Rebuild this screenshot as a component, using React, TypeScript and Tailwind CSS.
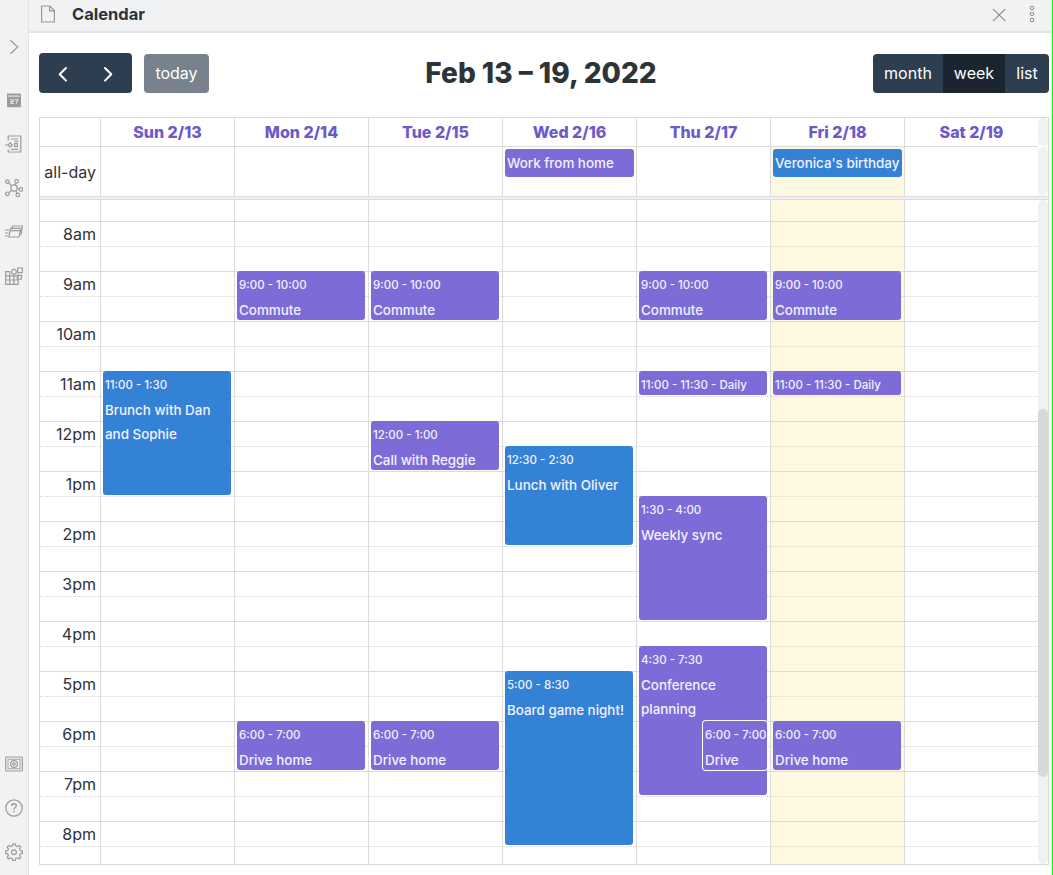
import type { ReactNode } from 'react';

type Tone = 'purple' | 'blue';
type CalEvent = { start: number; end: number; time: string; title: string; tone: Tone; inline?: boolean; nested?: boolean };
type Day = { label: string; allDay?: { title: string; tone: Tone }; today?: boolean; events: CalEvent[] };

const HOUR = 50;
const FIRST_HOUR_OFFSET = 21;

const tones: Record<Tone, string> = { purple: 'bg-[#7d6cd7]', blue: 'bg-[#3482d6]' };

const commute: CalEvent = { start: 9, end: 10, time: '9:00 - 10:00', title: 'Commute', tone: 'purple' };
const drive: CalEvent = { start: 18, end: 19, time: '6:00 - 7:00', title: 'Drive home', tone: 'purple' };
const daily: CalEvent = { start: 11, end: 11.5, time: '11:00 - 11:30', title: 'Daily', tone: 'purple', inline: true };

const days: Day[] = [
  { label: 'Sun 2/13', events: [{ start: 11, end: 13.5, time: '11:00 - 1:30', title: 'Brunch with Dan and Sophie', tone: 'blue' }] },
  { label: 'Mon 2/14', events: [commute, drive] },
  {
    label: 'Tue 2/15',
    events: [commute, { start: 12, end: 13, time: '12:00 - 1:00', title: 'Call with Reggie', tone: 'purple' }, drive],
  },
  {
    label: 'Wed 2/16',
    allDay: { title: 'Work from home', tone: 'purple' },
    events: [
      { start: 12.5, end: 14.5, time: '12:30 - 2:30', title: 'Lunch with Oliver', tone: 'blue' },
      { start: 17, end: 20.5, time: '5:00 - 8:30', title: 'Board game night!', tone: 'blue' },
    ],
  },
  {
    label: 'Thu 2/17',
    events: [
      commute,
      daily,
      { start: 13.5, end: 16, time: '1:30 - 4:00', title: 'Weekly sync', tone: 'purple' },
      { start: 16.5, end: 19.5, time: '4:30 - 7:30', title: 'Conference planning', tone: 'purple' },
      { ...drive, title: 'Drive', nested: true },
    ],
  },
  {
    label: 'Fri 2/18',
    today: true,
    allDay: { title: "Veronica's birthday", tone: 'blue' },
    events: [commute, daily, drive],
  },
  { label: 'Sat 2/19', events: [] },
];

const hours = ['8am', '9am', '10am', '11am', '12pm', '1pm', '2pm', '3pm', '4pm', '5pm', '6pm', '7pm', '8pm'];

function Icon({ children, size = 18 }: { children: ReactNode; size?: number }) {
  return (
    <svg width={size} height={size} viewBox="0 0 18 18" fill="none" stroke="#9b9b9b" strokeWidth="1.2" className="block shrink-0">
      {children}
    </svg>
  );
}

function Sidebar() {
  return (
    <aside className="flex w-[29px] shrink-0 flex-col items-center border-r border-[#e1e2e4] bg-[#f1f2f4] pt-[38px] pb-[14px] pr-px">
      <Icon>
        <path d="M5.5 2.3 12.7 9l-7.2 6.7" />
      </Icon>
      <div className="mt-[35px] flex flex-col gap-[26px]">
        <Icon>
          <rect x="2" y="2.4" width="14" height="13.8" rx="0.6" fill="#9b9b9b" stroke="none" />
          <path d="M3.2 5.1h11.6" stroke="#f1f2f4" strokeWidth="1" />
          <path d="M5.4 8.8h2.8v1.7H5.8v1.9h2.8M9.9 8.8h2.9l-1.6 3.8" stroke="#f1f2f4" strokeWidth="1" />
        </Icon>
        <Icon>
          <path d="M3.2 5.4V1h12.6v16H3.2v-2.6M6 4h7M9.6 6.3h3.6M6 14.3h7.2" />
          <path d="M0 10h3M3 10l2.2-2.2L7.4 10l-2.2 2.2Z" />
          <rect x="9.6" y="8.5" width="2.8" height="3" />
        </Icon>
        <Icon>
          <circle cx="9" cy="9" r="3.2" />
          <circle cx="2.4" cy="2.6" r="1.8" />
          <circle cx="11.6" cy="2.3" r="1.8" />
          <circle cx="16" cy="10.4" r="1.8" />
          <circle cx="12.8" cy="15.9" r="1.8" />
          <circle cx="2.4" cy="14.8" r="1.8" />
          <path d="m3.8 4 2.8 2.8M10.9 4.1l-.7 2M12.2 9.5l1.9.4M10.8 11.7l1.1 2.4M6.7 11.4l-3 2.3" />
        </Icon>
        <Icon>
          <path d="M5.6 5.4h10.2l-1.7 8.6H3.9Z" />
          <path d="M7 5.2l.5-2.2h10.1L16 11.4h-1.2M5.4 7.6h9.8" />
          <path d="M0 7h4M0 10h3.4M0 13h3" />
        </Icon>
        <Icon>
          <path d="M.7 4.6h4v4.2h8.4v8.5H.7ZM.7 8.8h4v8.5M.7 13h12.4M8.9 8.8v8.5M12.7 1h4.6v4.6h-4.6ZM12.6 8.2l4 .4-.5 3.8-3.8-.4Z" />
          <path d="M6.8 3.6 9 2l2.2 1.6v2.5L9 7.6 6.8 6.1Z" />
        </Icon>
      </div>
      <div className="mt-auto flex flex-col gap-[26px]">
        <Icon>
          <rect x="0.7" y="2" width="16.6" height="14" rx="0.8" />
          <rect x="3" y="4.2" width="12" height="9.6" strokeWidth="0.9" />
          <circle cx="9" cy="9" r="3.4" />
          <circle cx="9" cy="9" r="1.2" />
        </Icon>
        <Icon>
          <circle cx="9" cy="9" r="8.2" />
          <path d="M6.7 7.1c0-1.5 1-2.3 2.3-2.3s2.3.8 2.3 2c0 1.6-2.3 1.7-2.3 3.6M9 11.8v1.5" strokeWidth="1.4" />
        </Icon>
        <Icon>
          <path
            d="M7.8.8h2.4l.4 2.1 1.7.7 1.8-1.2 1.7 1.7-1.2 1.8.7 1.7 2.1.4v2.4l-2.1.4-.7 1.7 1.2 1.8-1.7 1.7-1.8-1.2-1.7.7-.4 2.1H7.8l-.4-2.1-1.7-.7L3.9 16l-1.7-1.7 1.2-1.8-.7-1.7-2.1-.4V8l2.1-.4.7-1.7-1.2-1.8 1.7-1.7 1.8 1.2 1.7-.7Z"
            strokeLinejoin="round"
          />
          <circle cx="9" cy="9.2" r="2.4" />
        </Icon>
      </div>
    </aside>
  );
}

function TitleBar() {
  return (
    <header className="flex h-[33px] shrink-0 items-start border-b-2 border-[#e3e4e6] bg-[#f1f2f4] pl-[11px] pr-4">
      <svg width="16" height="18" viewBox="0 0 16 18" fill="none" stroke="#999" strokeWidth="1.2" className="mt-[5px]">
        <path d="M1.6 1h8.2l4.6 4.6V17H1.6ZM9.6 1v4.8h4.8" />
      </svg>
      <h1 className="ml-4 mt-[3px] text-[16.5px] font-bold leading-[22px] text-[#2e3338]">Calendar</h1>
      <div className="ml-auto mt-[5px] flex items-center gap-[21px]">
        <svg width="16" height="18" viewBox="0 0 16 18" fill="none" stroke="#888" strokeWidth="1.1">
          <path d="m2 3.8 12.4 12.4M14.4 3.8 2 16.2" />
        </svg>
        <svg width="8" height="18" viewBox="0 0 8 18" fill="none" stroke="#8a8a8a" strokeWidth="1">
          <circle cx="4" cy="3" r="1.8" />
          <circle cx="4" cy="9" r="1.8" />
          <circle cx="4" cy="15" r="1.8" />
        </svg>
      </div>
    </header>
  );
}

function Toolbar() {
  return (
    <div className="flex h-10 items-end justify-between">
      <div className="flex items-end gap-3">
        <div className="flex h-10 w-[93px] items-center justify-center rounded-[4px] bg-[#2c3e50]">
          {['M11 3 4.7 9.3l6.3 6.3', 'M5 3l6.3 6.3L5 15.6'].map((d) => (
            <button key={d} className="flex h-10 w-[45px] items-center justify-center">
              <svg width="16" height="18" viewBox="0 0 16 18" fill="none" stroke="#fff" strokeWidth="2" strokeLinecap="round" strokeLinejoin="round" className="mt-[2px]">
                <path d={d} />
              </svg>
            </button>
          ))}
        </div>
        <button className="h-[39px] w-[65px] rounded-[4px] bg-[#77828e] pb-[2px] text-[16px] text-white">today</button>
      </div>
      <h2 className="text-[28px] font-extrabold leading-10 text-[#2e3338]">Feb 13 – 19, 2022</h2>
      <div className="flex h-[39px] overflow-hidden rounded-[4px] bg-[#2c3e50] text-[16px] text-white">
        <button className="w-[70px] pb-[2px]">month</button>
        <button className="w-[62px] bg-[#1a252f] pb-[2px]">week</button>
        <button className="w-[44px] pb-[2px]">list</button>
      </div>
    </div>
  );
}

function EventCard({ event }: { event: CalEvent }) {
  const top = FIRST_HOUR_OFFSET + (event.start - 8) * HOUR;
  const height = (event.end - event.start) * HOUR - 1;
  return (
    <div
      className={`absolute right-[3px] overflow-hidden rounded-[3px] pl-[2px] text-[13.4px] font-medium leading-6 text-[#f3f1fd] ${tones[event.tone]} ${
        event.nested ? 'left-[66px] shadow-[0_0_0_1px_#fff]' : 'left-[2px]'
      }`}
      style={{ top, height }}
    >
      {event.inline ? (
        <div className="whitespace-nowrap pt-[2px] text-[11.5px]">
          {event.time} - {event.title}
        </div>
      ) : (
        <>
          <div className="h-[27px] whitespace-nowrap pt-[2px] text-[11.5px]">{event.time}</div>
          <div>{event.title}</div>
        </>
      )}
    </div>
  );
}

function Slots({ labels }: { labels?: boolean }) {
  return (
    <>
      <div className="h-[21px]" />
      {hours.map((hour) => (
        <div key={hour} className="h-[50px]">
          <div className="h-[25px] border-t border-[#dcdcdc] pr-1 text-right text-[16px] leading-[25px] text-[#2e3338]">
            {labels ? hour : null}
          </div>
          <div className="h-[25px] border-t border-dotted border-[#d8d8d8]" />
        </div>
      ))}
    </>
  );
}

function Calendar() {
  return (
    <div className="mt-6 flex h-[748px] flex-col overflow-hidden border border-[#d9d9d9]">
      <div className="flex h-[28px] shrink-0">
        <div className="w-[60px]" />
        {days.map((day) => (
          <div key={day.label} className="w-[134px] border-l border-[#dcdcdc] text-center text-[16px] font-extrabold leading-[28px] text-[#6c5acb]">
            {day.label}
          </div>
        ))}
        <div className="w-[10px] rounded-[5px] bg-[#f1f1f1]" />
      </div>
      <div className="flex h-[50px] shrink-0">
        <div className="w-[60px] border-t border-[#dcdcdc] pr-1 text-right text-[16px] leading-[50px] text-[#2e3338]">all-day</div>
        {days.map((day) => (
          <div key={day.label} className={`w-[134px] border-l border-t border-[#dcdcdc] pl-[2px] pt-[2px] ${day.today ? 'bg-[#fff8e1]' : ''}`}>
            {day.allDay && (
              <div className={`h-7 w-[129px] whitespace-nowrap rounded-[3px] pl-[2px] text-[13.4px] font-medium leading-7 text-[#f3f1fd] ${tones[day.allDay.tone]}`}>
                {day.allDay.title}
              </div>
            )}
          </div>
        ))}
        <div className="mt-px w-[10px] rounded-[5px] bg-[#f1f1f1]" />
      </div>
      <div className="h-1 shrink-0 border-y border-[#dcdcdc] bg-[#f0f0f0]" />
      <div className="flex min-h-0 flex-1 overflow-hidden">
        <div className="w-[60px]">
          <Slots labels />
        </div>
        {days.map((day) => (
          <div key={day.label} className={`relative h-[671px] w-[134px] border-l border-[#dcdcdc] ${day.today ? 'bg-[#fff8e1]' : ''}`}>
            <Slots />
            {day.events.map((event) => (
              <EventCard key={event.start} event={event} />
            ))}
          </div>
        ))}
        <div className="w-[10px] rounded-[5px] bg-[#f1f1f1] pt-[209px]">
          <div className="h-[368px] rounded-[5px] bg-[#d8d8d8]" />
        </div>
      </div>
    </div>
  );
}

export default function App() {
  return (
    <div className="flex h-[875px] w-[1053px] overflow-hidden border-r border-[#00ff00] bg-white font-['Inter','Liberation_Sans',sans-serif]">
      <Sidebar />
      <main className="flex min-w-0 flex-1 flex-col">
        <TitleBar />
        <div className="w-[1020px] pl-[10px] pt-5">
          <Toolbar />
          <Calendar />
        </div>
      </main>
    </div>
  );
}
